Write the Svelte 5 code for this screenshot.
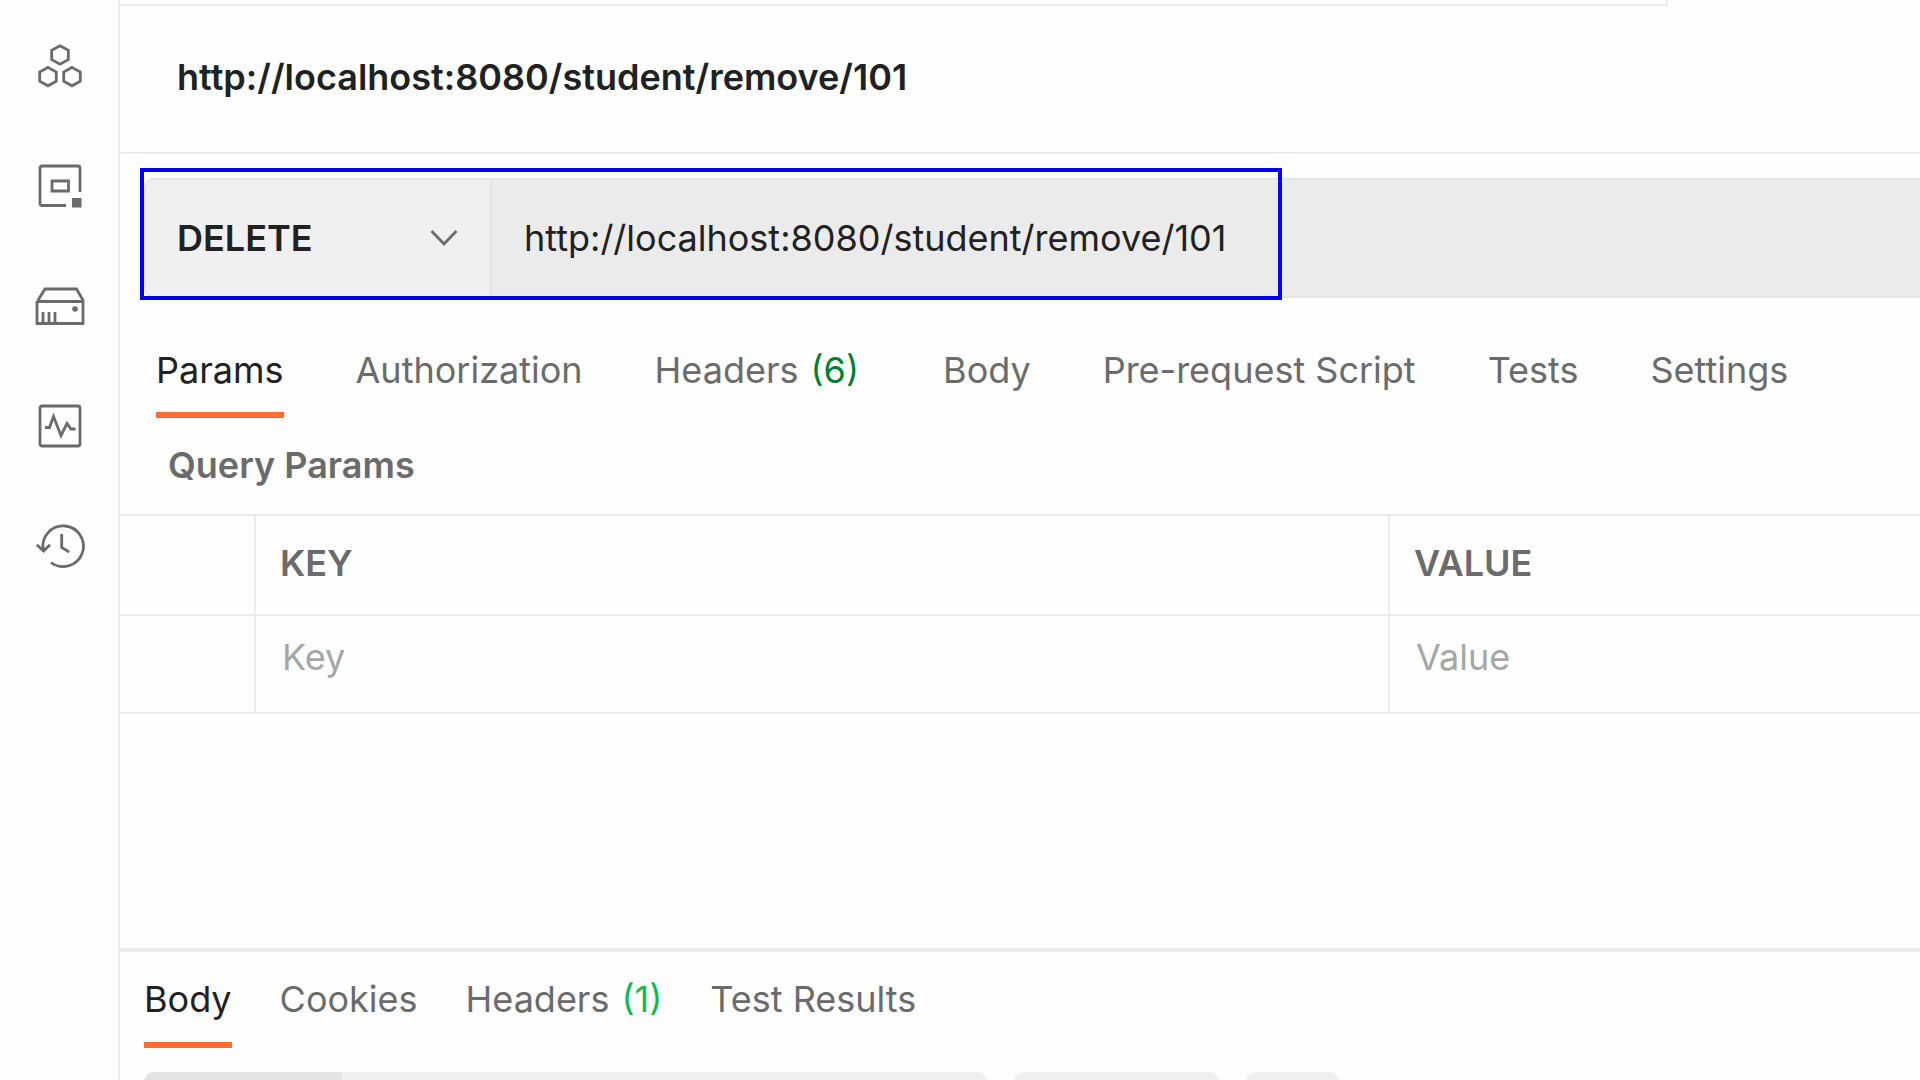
<script>
  const requestTabs = [
    { label: 'Params', active: true },
    { label: 'Authorization' },
    { label: 'Headers', count: 6, marked: true },
    { label: 'Body' },
    { label: 'Pre-request Script' },
    { label: 'Tests' },
    { label: 'Settings' }
  ];
  const responseTabs = [
    { label: 'Body', active: true },
    { label: 'Cookies' },
    { label: 'Headers', count: 1 },
    { label: 'Test Results' }
  ];

  let method = $state('DELETE');
  let url = $state('http://localhost:8080/student/remove/101');
</script>

<div class="app">
  <nav class="sidebar" aria-label="Workspace">
    <button type="button" aria-label="APIs">
      <svg viewBox="0 0 48 48">
        <path d="M25 3.8l8.3 4.6v9.2L25 22.2l-8.3-4.6V8.4z" />
        <path d="M13 25.4l8.3 4.6v9.2L13 43.8l-8.3-4.6V30z" />
        <path d="M37 25.4l8.3 4.6v9.2L37 43.8l-8.3-4.6V30z" />
      </svg>
    </button>
    <button type="button" aria-label="Environments">
      <svg viewBox="0 0 48 48">
        <path d="M31 43.500H7q-2 0-2-2V6q0-2 2-2h36q2 0 2 2v24" />
        <path d="M17 19h16.500v10H17z" />
        <path class="solid" d="M37 36h9.500v9.500H37z" />
      </svg>
    </button>
    <button type="button" aria-label="Mock Servers">
      <svg viewBox="0 0 48 48">
        <path d="M2 19.500h46M2.500 19L10 7h31.500l7 12M2 19v22.500h46V19M8 30v11M14 30v11M20 30v11" />
        <circle class="solid" cx="40" cy="27" r="2.800" />
      </svg>
    </button>
    <button type="button" aria-label="Monitors">
      <svg viewBox="0 0 48 48">
        <rect x="5" y="4" width="40" height="40" rx="2" />
        <path d="M10 25.500h4.500l4-11L26 33.500l6-12 4 5.500h4.500" />
      </svg>
    </button>
    <button type="button" aria-label="History">
      <svg viewBox="0 0 48 48">
        <path d="M8.200 28A20.300 20.300 0 1 1 16 40.500M1.800 22.800L8.500 29l6.500-6.200M26.700 12v13.500l7.500 4.500" />
      </svg>
    </button>
  </nav>

  <main>
    <div class="open-tab"></div>
    <h1>{url}</h1>

    <form class="request" onsubmit={(e) => e.preventDefault()}>
      <div class="method">
        <select aria-label="Method" bind:value={method}>
          <option>GET</option>
          <option>POST</option>
          <option>PUT</option>
          <option>DELETE</option>
        </select>
        <svg viewBox="0 0 28 18" aria-hidden="true"><path d="M1.500 2L14 15 26.500 2" /></svg>
      </div>
      <input class="url" type="text" aria-label="Request URL" spellcheck="false" bind:value={url} />
      <div class="highlight"></div>
    </form>

    <div class="tabs request-tabs" role="tablist">
      {#each requestTabs as tab}
        <button type="button" role="tab" aria-selected={!!tab.active} class:active={tab.active} class:marked={tab.marked}>
          {tab.label}{#if tab.count}<span class="count">({tab.count})</span>{/if}
        </button>
      {/each}
    </div>

    <h2>Query Params</h2>
    <table>
      <thead>
        <tr>
          <th class="check"></th>
          <th class="key">KEY</th>
          <th>VALUE</th>
        </tr>
      </thead>
      <tbody>
        <tr>
          <td></td>
          <td><input type="text" aria-label="Key" placeholder="Key" /></td>
          <td><input type="text" aria-label="Value" placeholder="Value" /></td>
        </tr>
      </tbody>
    </table>

    <section class="response">
      <div class="tabs response-tabs" role="tablist">
        {#each responseTabs as tab}
          <button type="button" role="tab" aria-selected={!!tab.active} class:active={tab.active}>
            {tab.label}{#if tab.count}<span class="count">({tab.count})</span>{/if}
          </button>
        {/each}
      </div>
      <div class="toolbar">
        <div class="views"><div class="current"></div></div>
        <div class="format"></div>
        <div class="wrap"></div>
      </div>
    </section>
  </main>
</div>

<style>
  :global(body) {
    margin: 0;
    background: #fefefe;
  }
  .app {
    --line: #ebebeb;
    --muted: #6b6b6b;
    --text: #212121;
    display: flex;
    height: 100vh;
    overflow: hidden;
    font: 400 36px/44px Inter, sans-serif;
    color: var(--text);
  }
  .app * {
    box-sizing: border-box;
  }
  button,
  input,
  select {
    margin: 0;
    padding: 0;
    border: 0;
    background: none;
    font: inherit;
    color: inherit;
    outline: none;
  }
  svg {
    fill: none;
    stroke: var(--muted);
    stroke-width: 2.8;
    overflow: visible;
  }
  .solid {
    fill: var(--muted);
    stroke: none;
  }

  .sidebar {
    flex: none;
    width: 120px;
    padding-top: 6px;
    border-right: 2px solid var(--line);
  }
  .sidebar button {
    display: flex;
    align-items: center;
    justify-content: center;
    width: 100%;
    height: 120px;
  }
  .sidebar svg {
    width: 48px;
    height: 48px;
  }

  main {
    flex: 1;
    min-width: 0;
  }
  .open-tab {
    width: 86%;
    height: 6px;
    border: solid var(--line);
    border-width: 0 2px 2px 0;
  }
  h1 {
    margin: 0;
    padding: 49px 57px 53px;
    border-bottom: 2px solid var(--line);
    font-size: 36px;
    font-weight: 600;
    line-height: 44px;
  }

  .request {
    position: relative;
    display: flex;
    height: 120px;
    margin: 24px 0 0 24px;
    border: 2px solid #e4e4e4;
    border-right: 0;
    border-radius: 10px 0 0 10px;
    background: #ebebeb;
  }
  .method {
    display: flex;
    align-items: center;
    width: 346px;
    border-right: 2px solid #e4e4e4;
    border-radius: 8px 0 0 8px;
    background: #f0f0f0;
  }
  .method select {
    width: 100%;
    height: 100%;
    padding-left: 31px;
    appearance: none;
    font-weight: 600;
  }
  .method svg {
    flex: none;
    width: 28px;
    height: 18px;
    margin: 0 32px 0 -60px;
    pointer-events: none;
  }
  .url {
    flex: 1;
    min-width: 0;
    padding-left: 32px;
  }
  .highlight {
    position: absolute;
    top: -12px;
    left: -6px;
    width: 1142px;
    height: 132px;
    border: 4px solid #0000ff;
    pointer-events: none;
  }

  .tabs {
    display: flex;
  }
  .tabs button {
    border-bottom: 6px solid transparent;
    color: var(--muted);
    white-space: nowrap;
    text-align: left;
  }
  .tabs .active {
    border-color: #ff6c37;
    color: var(--text);
  }
  .request-tabs {
    gap: 72px;
    padding: 50px 36px 0;
  }
  .request-tabs button {
    height: 70px;
    padding-bottom: 20px;
  }
  .request-tabs .marked {
    padding-right: 12px;
  }
  .count {
    margin-left: 12px;
    color: #007f31;
  }

  h2 {
    margin: 0;
    padding: 25px 48px 27px;
    font-size: 36px;
    font-weight: 600;
    line-height: 44px;
    color: var(--muted);
  }
  table {
    width: 100%;
    table-layout: fixed;
    border-spacing: 0;
    border-top: 2px solid var(--line);
  }
  th,
  td {
    padding: 0;
    border-bottom: 2px solid var(--line);
    text-align: left;
  }
  th + th,
  td + td {
    border-left: 2px solid var(--line);
  }
  th {
    height: 100px;
    padding-bottom: 4px;
    font-weight: 600;
    color: var(--muted);
  }
  th + th {
    padding-left: 24px;
  }
  td {
    height: 98px;
  }
  .check {
    width: 134px;
  }
  .key {
    width: 1134px;
  }
  td input {
    display: block;
    width: 100%;
    height: 96px;
    padding: 0 26px 14px;
  }
  td input::placeholder {
    color: #a6a6a6;
    opacity: 1;
  }

  .response {
    margin-top: 234px;
    border-top: 4px solid var(--line);
  }
  .response-tabs {
    gap: 48px;
    padding: 25px 24px 0;
  }
  .response-tabs button {
    height: 71px;
    padding-bottom: 21px;
  }
  .response-tabs .count {
    color: #0cbb52;
  }
  .toolbar {
    display: flex;
    gap: 26px;
    padding: 24px 24px 0;
  }
  .toolbar > div {
    height: 64px;
    border-radius: 10px;
    background: #f0f0f0;
    overflow: hidden;
  }
  .views {
    width: 844px;
  }
  .current {
    width: 198px;
    height: 100%;
    background: #e4e4e4;
  }
  .format {
    width: 206px;
  }
  .wrap {
    width: 94px;
  }
</style>
